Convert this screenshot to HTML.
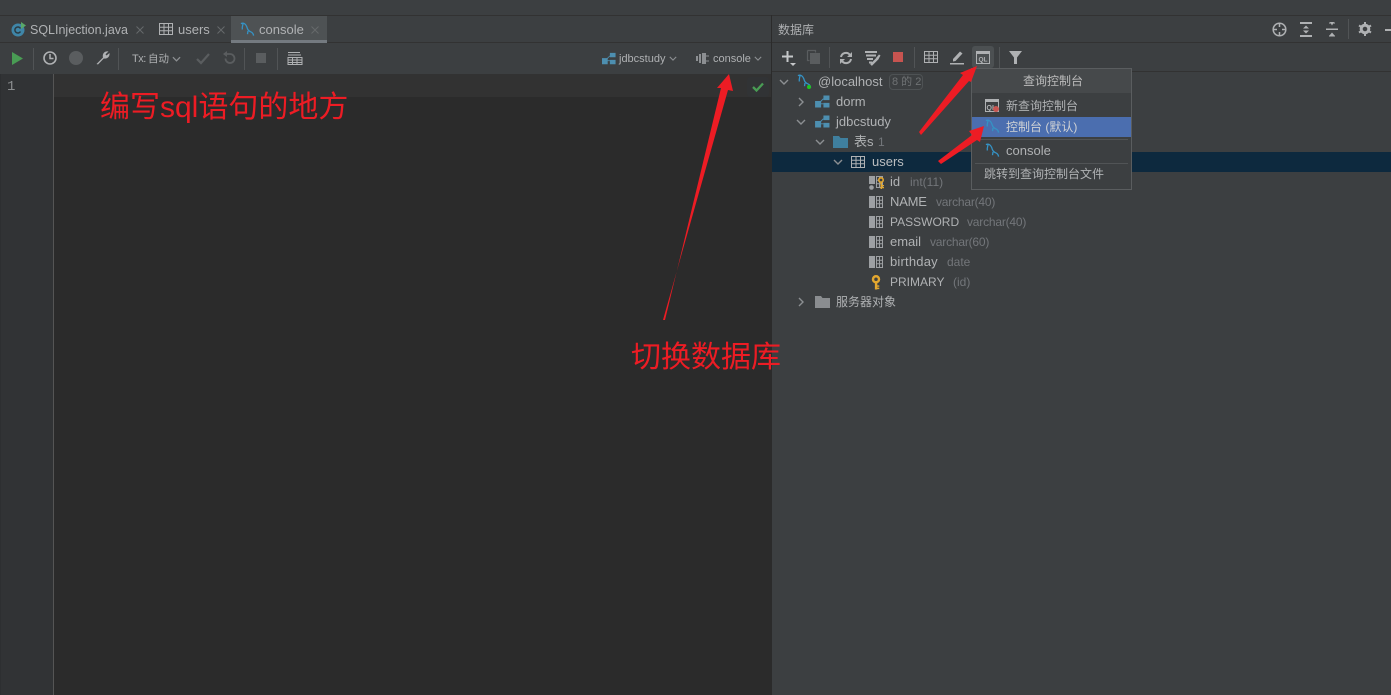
<!DOCTYPE html>
<html><head><meta charset="utf-8">
<style>
html,body{margin:0;padding:0;background:#3c3f41}
#r{position:relative;width:1391px;height:695px;overflow:hidden;background:#3c3f41;font-family:"Liberation Sans","Noto Sans CJK SC",sans-serif;font-size:13px;color:#b0b2b4}
.a{position:absolute}
.t{position:absolute;white-space:nowrap;line-height:16px}
.g{color:#73767a;font-size:12px}
.v{letter-spacing:-.2px}
svg{position:absolute;overflow:visible}
</style></head><body><div id="r">
<svg width="0" height="0"><defs>
<symbol id="dol" viewBox="0 0 16 16" overflow="visible"><path d="M1 1.800C3.500 .5 6 1.800 7 4.500C8 7.500 8.500 9 10.500 10C12.500 11 14 11.500 14.500 14.500M3.200 2C2.800 4 2 5.500 2.500 8M8.500 9.500L8 13" fill="none" stroke="#3592c4" stroke-width="1.400"/></symbol>
<symbol id="db" viewBox="0 0 16 14"><path d="M0 6.500h6.500v7H0zM9 .5h6.500v5H9zM9 8.500h6.500v5H9z" fill="#4d8fb0"/><path d="M6 9.500h3M9 4L6 7" stroke="#4d8fb0" fill="none"/></symbol>
<symbol id="col" viewBox="0 0 14 12"><path d="M0 0h6v12H0z" fill="#9da0a3"/><path d="M7.500.5h6v11h-6zM7.500 4.200h6M7.500 7.800h6M10.500.5v11" fill="none" stroke="#9da0a3"/></symbol>
<symbol id="tbl" viewBox="0 0 14 12"><path d="M.5.500h13v11H.5zM.5 4.200h13M.5 7.800h13M5 .5v11M9.500.5v11" fill="none" stroke="#afb1b3"/></symbol>
<symbol id="cd" viewBox="0 0 10 6"><path d="M1 1l4 4 4-4" fill="none" stroke="#8c8f92" stroke-width="1.400"/></symbol>
<symbol id="cr" viewBox="0 0 6 10"><path d="M1 1l4 4-4 4" fill="none" stroke="#8c8f92" stroke-width="1.400"/></symbol>
<symbol id="key" viewBox="0 0 10 16"><circle cx="5" cy="4.500" r="3.200" fill="none" stroke="#e3a72f" stroke-width="2.600"/><path d="M3.800 8h2.600v7.500H3.800zM6 11h2.500v1.500H6zM6 13.500h2.500V15H6z" fill="#e3a72f"/></symbol>
<symbol id="x" viewBox="0 0 8 8"><path d="M.5.500l7 7M7.500.500l-7 7" stroke="#66696b" stroke-width="1" fill="none"/></symbol>
</defs></svg>

<!-- top bars -->
<div class="a" style="left:0;top:0;width:1391px;height:15px;background:#3c3f41;border-bottom:1px solid #323232"></div>
<div class="a" style="left:0;top:42px;width:1391px;height:1px;background:#323232"></div>

<!-- tabs -->
<div class="a" style="left:231px;top:16px;width:96px;height:26px;background:#4e5254"></div>
<div class="a" style="left:231px;top:40px;width:96px;height:3px;background:#747a80"></div>
<svg style="left:11px;top:22px" width="15" height="15"><circle cx="7" cy="8" r="6.500" fill="#3f86a8"/><path d="M9.500 6.500a3 3 0 1 0 0 3" fill="none" stroke="#2b3a42" stroke-width="1.500"/><path d="M10 0l5 3.500-5 3.500z" fill="#59a869"/></svg>
<div class="t" style="left:30px;top:22px;font-size:12.500px">SQLInjection.java</div>
<svg style="left:136px;top:26px" width="8" height="8"><use href="#x" width="8" height="8"/></svg>
<svg style="left:159px;top:23px" width="14" height="13"><use href="#tbl" width="14" height="12"/></svg>
<div class="t" style="left:178px;top:22px">users</div>
<svg style="left:217px;top:26px" width="8" height="8"><use href="#x" width="8" height="8"/></svg>
<svg style="left:240px;top:22px" width="15" height="15"><use href="#dol" width="15" height="15"/></svg>
<div class="t" style="left:259px;top:22px">console</div>
<svg style="left:311px;top:26px" width="8" height="8"><use href="#x" width="8" height="8"/></svg>

<!-- right panel separators -->
<div class="a" style="left:771px;top:15px;width:1px;height:680px;background:#2b2b2b"></div>
<div class="t" style="left:778px;top:22px;font-size:12px;color:#aeb0b2">数据库</div>
<div class="a" style="left:772px;top:71px;width:619px;height:1px;background:#323232"></div>

<!-- left toolbar -->
<svg style="left:12px;top:52px" width="12" height="13"><path d="M0 0l11 6.500L0 13z" fill="#499c54"/></svg>
<div class="a" style="left:33px;top:48px;width:1px;height:22px;background:#515456"></div>
<svg style="left:43px;top:51px" width="14" height="14"><circle cx="7" cy="7" r="6" fill="none" stroke="#afb1b3" stroke-width="1.600"/><path d="M7 3v4.500h3.500" fill="none" stroke="#afb1b3" stroke-width="1.500"/></svg>
<svg style="left:69px;top:51px" width="14" height="14"><circle cx="7" cy="7" r="7" fill="#5a5d5f"/></svg>
<svg style="left:95px;top:50px" width="15" height="15"><path d="M1.500 14L8 7.500C7 4 9.500 .5 13.500 1.500L10.500 4.300 11.500 5.500 14.500 3C15 7 12 9 8.800 8.500L3 14.500z" fill="#afb1b3"/></svg>
<div class="a" style="left:118px;top:48px;width:1px;height:22px;background:#515456"></div>
<div class="t" style="left:132px;top:51px;font-size:11px;color:#aeb0b2;letter-spacing:-.5px">Tx:</div>
<div class="t" style="left:148px;top:51px;font-size:10.500px;color:#aeb0b2">自动</div>
<svg style="left:172px;top:56px" width="9" height="6"><use href="#cd" width="9" height="6"/></svg>
<svg style="left:196px;top:53px" width="14" height="11"><path d="M1 6l4 4 8-9" fill="none" stroke="#5a5d5f" stroke-width="2.200"/></svg>
<svg style="left:222px;top:51px" width="13" height="14"><path d="M2 3h6a4.500 4.500 0 1 1-4.500 4.500" fill="none" stroke="#5a5d5f" stroke-width="1.800"/><path d="M5 0v6L1 3z" fill="#5a5d5f"/></svg>
<div class="a" style="left:244px;top:48px;width:1px;height:22px;background:#515456"></div>
<div class="a" style="left:256px;top:53px;width:10px;height:10px;background:#5a5d5f"></div>
<div class="a" style="left:277px;top:48px;width:1px;height:22px;background:#515456"></div>
<svg style="left:288px;top:52px" width="14" height="13"><path d="M0 .5h12M0 3h13M0 5.500h14v7H0zM0 8h14M0 10.500h14M4.500 5.500v7M9 5.500v7" fill="none" stroke="#afb1b3"/></svg>

<svg style="left:602px;top:52px" width="14" height="13"><use href="#db" width="14" height="13"/></svg>
<div class="t" style="left:619px;top:51px;font-size:11px;color:#aeb0b2">jdbcstudy</div>
<svg style="left:669px;top:56px" width="8" height="5"><use href="#cd" width="8" height="5"/></svg>
<svg style="left:696px;top:53px" width="14" height="11"><path d="M0 3h2v5H0zM3 1h2v9H3zM6 0h4v11H6z" fill="#8c8f92"/><path d="M10 3h3M10 8h3" stroke="#8c8f92"/></svg>
<div class="t" style="left:713px;top:51px;font-size:11px;color:#aeb0b2">console</div>
<svg style="left:754px;top:56px" width="8" height="5"><use href="#cd" width="8" height="5"/></svg>

<!-- editor -->
<div class="a" style="left:0;top:74px;width:771px;height:621px;background:#2b2b2b"></div>
<div class="a" style="left:0;top:74px;width:53px;height:621px;background:#313335"></div>
<div class="a" style="left:53px;top:74px;width:1px;height:621px;background:#555"></div>
<div class="a" style="left:54px;top:74px;width:717px;height:23px;background:#323232"></div>
<div class="a" style="left:0;top:74px;width:1px;height:621px;background:#2d2f31"></div>
<div class="t" style="left:7px;top:79px;font-family:'Liberation Mono',monospace;font-size:14px;color:#8a8d8f">1</div>
<div class="a" style="left:747px;top:77px;width:22px;height:20px;background:#313335;border-radius:3px"></div>
<svg style="left:752px;top:82px" width="12" height="10"><path d="M1 5l3.500 3.500L11 1.500" fill="none" stroke="#499c54" stroke-width="2.300"/></svg>
<div class="t" style="left:100px;top:91px;font-size:30px;line-height:34px;color:#ed1c24">编写sql语句的地方</div>
<div class="t" style="left:631px;top:341px;font-size:30px;line-height:34px;color:#ed1c24">切换数据库</div>

<!-- right header icons -->
<svg style="left:1272px;top:22px" width="15" height="15"><circle cx="7.500" cy="7.500" r="6.300" fill="none" stroke="#afb1b3" stroke-width="1.500"/><path d="M7.500 1v4M7.500 10v4M1 7.500h4M10 7.500h4" stroke="#afb1b3" stroke-width="1.500"/></svg>
<svg style="left:1300px;top:22px" width="13" height="15"><path d="M0 0h12v2H0zM0 13h12v2H0zM6 3.500L9 6.500H3zM6 11.500L3 8.500h6z" fill="#afb1b3"/></svg>
<svg style="left:1326px;top:22px" width="13" height="15"><path d="M0 6.500h12v1.500H0zM4 0h4L6 3.500zM6 10.500l3 3.500H3z" fill="#afb1b3"/><path d="M3 1h6M3 14h6" stroke="#afb1b3"/></svg>
<div class="a" style="left:1348px;top:19px;width:1px;height:20px;background:#515456"></div>
<svg style="left:1358px;top:22px" width="14" height="14"><circle cx="7" cy="7" r="3.800" fill="none" stroke="#afb1b3" stroke-width="3"/><path d="M7 0v14M1 3.500l12 7M13 3.500l-12 7" stroke="#afb1b3" stroke-width="2" stroke-dasharray="2.500 9 2.500"/></svg>
<div class="a" style="left:1385px;top:29px;width:6px;height:2px;background:#afb1b3"></div>

<!-- right toolbar -->
<svg style="left:782px;top:51px" width="15" height="15"><path d="M5.500 0v11M0 5.500h11" stroke="#c5c7c9" stroke-width="2"/><path d="M8 12h6l-3 3z" fill="#c5c7c9"/></svg>
<svg style="left:807px;top:50px" width="13" height="14"><path d="M.5.500h8v2M.5.500v10h2" fill="none" stroke="#5a5d5f" stroke-width="1.200"/><path d="M3 3h10v11H3z" fill="#5a5d5f"/></svg>
<div class="a" style="left:829px;top:47px;width:1px;height:21px;background:#515456"></div>
<svg style="left:839px;top:51px" width="14" height="14"><path d="M2 6a5 5 0 0 1 9-2M12 8a5 5 0 0 1-9 2" fill="none" stroke="#afb1b3" stroke-width="2"/><path d="M13 1v5H8zM1 13V8h5z" fill="#afb1b3"/></svg>
<svg style="left:865px;top:50px" width="16" height="16"><path d="M0 1h12v2H0zM1 4.500h10v2H1zM2 8h6v2H2zM4 11.500h3v2H4z" fill="#afb1b3"/><path d="M6 15l7-7" stroke="#afb1b3" stroke-width="2.500"/><path d="M11 8l3-3.500 1.500 1L13.500 9z" fill="#afb1b3"/></svg>
<div class="a" style="left:893px;top:52px;width:10px;height:10px;background:#c75450"></div>
<div class="a" style="left:914px;top:47px;width:1px;height:21px;background:#515456"></div>
<svg style="left:924px;top:51px" width="14" height="12"><use href="#tbl" width="14" height="12"/></svg>
<svg style="left:950px;top:50px" width="14" height="14"><path d="M3 9l7-7.500 2.500 2L5.500 11 3 11.500z" fill="#afb1b3"/><path d="M0 13h14v1.500H0z" fill="#afb1b3"/></svg>
<div class="a" style="left:972px;top:46px;width:22px;height:22px;background:#4c5052;border-radius:3px"></div>
<svg style="left:976px;top:51px" width="14" height="13"><path d="M.5.500h13v12H.5z" fill="none" stroke="#afb1b3"/><path d="M0 0h14v3H0z" fill="#afb1b3"/><text x="2.500" y="10.500" font-size="6.500" font-weight="bold" fill="#afb1b3" font-family="Liberation Sans">QL</text></svg>
<div class="a" style="left:999px;top:47px;width:1px;height:21px;background:#515456"></div>
<svg style="left:1009px;top:51px" width="13" height="13"><path d="M0 0h13L8 6.500V13H5V6.500z" fill="#afb1b3"/></svg>

<!-- tree -->
<div class="a" style="left:772px;top:152px;width:619px;height:20px;background:#0d293e"></div>
<svg style="left:779px;top:79px" width="10" height="6"><use href="#cd" width="10" height="6"/></svg>
<svg style="left:797px;top:74px" width="15" height="15"><use href="#dol" width="15" height="15"/><circle cx="12" cy="13" r="2" fill="#1ec81e"/></svg>
<div class="t" style="left:818px;top:74px">@localhost</div>
<div class="a" style="left:889px;top:74px;width:32px;height:14px;border:1px solid #4e5254;border-radius:4px"></div>
<div class="t" style="left:892px;top:74px;font-size:11px;color:#6f7274">8 的 2</div>

<svg style="left:798px;top:97px" width="6" height="10"><use href="#cr" width="6" height="10"/></svg>
<svg style="left:815px;top:95px" width="15" height="13"><use href="#db" width="15" height="13"/></svg>
<div class="t" style="left:836px;top:94px">dorm</div>
<svg style="left:796px;top:119px" width="10" height="6"><use href="#cd" width="10" height="6"/></svg>
<svg style="left:815px;top:115px" width="15" height="13"><use href="#db" width="15" height="13"/></svg>
<div class="t" style="left:836px;top:114px">jdbcstudy</div>
<svg style="left:815px;top:139px" width="10" height="6"><use href="#cd" width="10" height="6"/></svg>
<svg style="left:833px;top:136px" width="15" height="12"><path d="M0 0h6l1.500 2H15v10H0z" fill="#3f7f9e"/></svg>
<div class="t" style="left:854px;top:134px">表s</div>
<div class="t g" style="left:878px;top:134px">1</div>
<svg style="left:833px;top:159px" width="10" height="6"><use href="#cd" width="10" height="6"/></svg>
<svg style="left:851px;top:156px" width="14" height="12"><use href="#tbl" width="14" height="12"/></svg>
<div class="t" style="left:872px;top:154px;color:#bcbec0">users</div>

<svg style="left:869px;top:176px" width="17" height="14"><use href="#col" width="14" height="12"/><path d="M0 8h6v6H0z" fill="#3c3f41"/><circle cx="2.500" cy="11.500" r="2.300" fill="#9da0a3"/><circle cx="12" cy="4" r="2.200" fill="#3c3f41" stroke="#e3a72f" stroke-width="1.600"/><path d="M11.500 6h1.500v7h-1.500zM13 9h2v1.200h-2zM13 11h2v1.200h-2z" fill="#e3a72f"/></svg>
<div class="t" style="left:890px;top:174px">id</div><div class="t g" style="left:910px;top:174px">int(11)</div>
<svg style="left:869px;top:196px" width="14" height="12"><use href="#col" width="14" height="12"/></svg>
<div class="t" style="left:890px;top:194px;letter-spacing:-.2px">NAME</div><div class="t g v" style="left:936px;top:194px">varchar(40)</div>
<svg style="left:869px;top:216px" width="14" height="12"><use href="#col" width="14" height="12"/></svg>
<div class="t" style="left:890px;top:214px;font-size:12px">PASSWORD</div><div class="t g v" style="left:967px;top:214px">varchar(40)</div>
<svg style="left:869px;top:236px" width="14" height="12"><use href="#col" width="14" height="12"/></svg>
<div class="t" style="left:890px;top:234px">email</div><div class="t g v" style="left:930px;top:234px">varchar(60)</div>
<svg style="left:869px;top:256px" width="14" height="12"><use href="#col" width="14" height="12"/></svg>
<div class="t" style="left:890px;top:254px;letter-spacing:.2px">birthday</div><div class="t g" style="left:947px;top:254px">date</div>
<svg style="left:871px;top:275px" width="10" height="15"><use href="#key" width="10" height="15"/></svg>
<div class="t" style="left:890px;top:274px;font-size:12px">PRIMARY</div><div class="t g" style="left:953px;top:274px">(id)</div>
<svg style="left:798px;top:297px" width="6" height="10"><use href="#cr" width="6" height="10"/></svg>
<svg style="left:815px;top:296px" width="15" height="12"><path d="M0 0h6l1.500 2H15v10H0z" fill="#8a8d90"/></svg>
<div class="t" style="left:836px;top:294px;font-size:12px">服务器对象</div>

<!-- popup -->
<div class="a" style="left:971px;top:68px;width:159px;height:120px;background:#3c3f41;border:1px solid #5a5d5f"></div>
<div class="a" style="left:972px;top:69px;width:159px;height:24px;background:#46494b"></div>
<div class="t" style="left:1023px;top:73px;font-size:12px;color:#bbb">查询控制台</div>
<svg style="left:985px;top:99px" width="15" height="14"><path d="M.5.500h13v12H.5z" fill="none" stroke="#afb1b3"/><path d="M0 0h14v3H0z" fill="#afb1b3"/><text x="1.500" y="11" font-size="7" font-weight="bold" fill="#afb1b3" font-family="Liberation Sans">QL</text><circle cx="11" cy="10" r="3" fill="#c75450"/></svg>
<div class="t" style="left:1006px;top:98px;font-size:12px">新查询控制台</div>
<div class="a" style="left:972px;top:117px;width:159px;height:20px;background:#4b6eaf"></div>
<svg style="left:985px;top:119px" width="15" height="15"><use href="#dol" width="15" height="15"/></svg>
<div class="t" style="left:1006px;top:119px;font-size:12px;color:#d0d2d4">控制台 (默认)</div>
<div class="a" style="left:975px;top:139px;width:153px;height:1px;background:#515456"></div>
<svg style="left:985px;top:143px" width="15" height="15"><use href="#dol" width="15" height="15"/></svg>
<div class="t" style="left:1006px;top:143px">console</div>
<div class="a" style="left:975px;top:163px;width:153px;height:1px;background:#515456"></div>
<div class="t" style="left:984px;top:166px;font-size:12px">跳转到查询控制台文件</div>

<!-- arrows -->
<svg style="left:0;top:0" width="1391" height="695">
<polygon points="663,320 665,320 721,88 717,88 729,74 733,91 728,90" fill="#ed1c24"/>
<polygon points="919,132 921,135 969,81 971,82 977,66 960,73 963,75" fill="#ed1c24"/>
<polygon points="938,161 941,164 977,140 980,142 984,126 969,131 972,135" fill="#ed1c24"/>
</svg>
</div></body></html>
